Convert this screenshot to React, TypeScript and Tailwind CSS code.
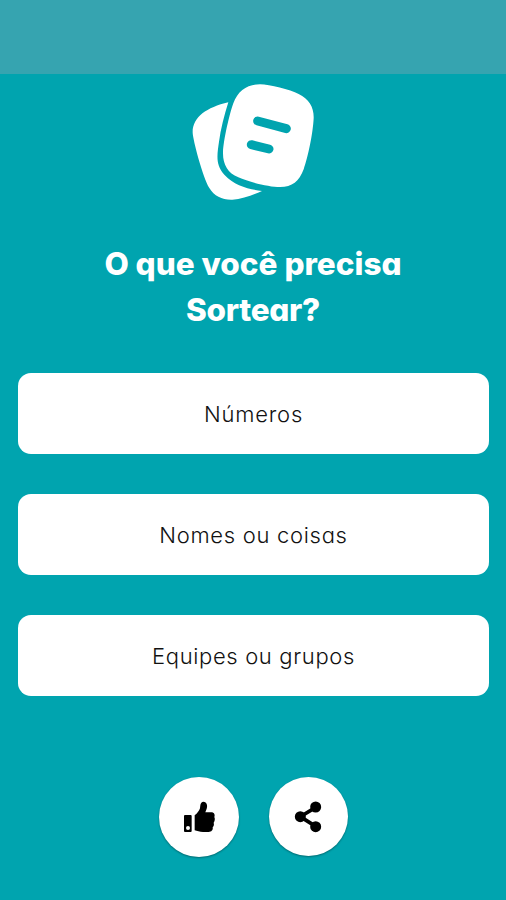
const options = [
  { label: "Números", spacing: "tracking-[0.8px]" },
  { label: "Nomes ou coisas", spacing: "tracking-[0.7px]" },
  { label: "Equipes ou grupos", spacing: "tracking-[0.65px]" },
];

function Logo() {
  return (
    <svg className="ml-1 block h-[136px] w-[150px]" viewBox="0 42 450 408" fill="none">
      <path
        d="M145 127 C80 142 37 172 38 218 C39 240 68 350 88 384 C103 409 127 420 157 419 C187 417 218 405 246 393 C207 388 163 377 133 344 C105 314 112 281 117 245 C122 207 133 165 145 127Z"
        fill="#fff"
      />
      <path
        d="M240 73 C269 73 330 89 356 102 C387 117 402 142 401 175 C399 219 384 292 371 328 C357 365 337 381 300 381 C268 381 206 366 175 352 C143 338 128 313 129 276 C131 238 148 164 160 130 C174 91 203 73 240 73Z"
        fill="#fff"
      />
      <path d="M233 183 L319 206 M214 254 L267 267" stroke="#00a4af" strokeWidth="27" strokeLinecap="round" />
    </svg>
  );
}

function ThumbIcon() {
  return (
    <svg className="size-[80px]" viewBox="27 36 240 240" fill="none">
      <path fillRule="evenodd" d="M105 150H122Q125 150 125 153V198Q125 201 122 201H105Q102 201 102 198V153Q102 150 105 150ZM114 183A6 6 0 1 0 114 195A6 6 0 1 0 114 183Z" fill="#000" />
      <path d="M134 151 C142 145 148 137 150 130 C151 121 151 111 160 110 C171 110 173 122 170 131 L166 142 H184 C192 142 196 149 193 156 C196 162 194 169 191 173 C193 179 191 184 188 187 C190 195 184 201 176 201 H159 C149 201 141 197 134 196Z" fill="#000" />
    </svg>
  );
}

function ShareIcon() {
  return (
    <svg className="size-[79px]" viewBox="28 36 237 237" fill="#000">
      <path d="M168 127L122 155L168 184" fill="none" stroke="#000" strokeWidth="11" />
      <circle cx="168" cy="126" r="16.5" />
      <circle cx="122" cy="155" r="16.5" />
      <circle cx="168" cy="185" r="16.5" />
    </svg>
  );
}

export default function App() {
  return (
    <main className="flex h-[900px] w-[506px] flex-col items-center overflow-hidden bg-[#00a4af] font-['Inter','Liberation_Sans',sans-serif] [font-feature-settings:'cv11']">
      <header className="h-[74px] w-full shrink-0 bg-[#36a4b0]" />
      <Logo />
      <h1 className="mt-[31px] text-center text-[31.5px] leading-[46px] font-extrabold text-white">
        <span className="block">O que você precisa</span>
        <span className="block tracking-[-0.3px]">Sortear?</span>
      </h1>
      <div className="mt-[40px] flex w-full flex-col gap-[40px] pr-[17px] pl-[18px]">
        {options.map((o) => (
          <button
            key={o.label}
            className={`h-[81px] w-full rounded-[13px] bg-white pt-[2px] text-[22px] font-light text-[#111] ${o.spacing}`}
          >
            {o.label}
          </button>
        ))}
      </div>
      <div className="mt-[81px] flex gap-[30px]">
        <button aria-label="Curtir" className="size-[80px] rounded-full bg-white shadow-[0_1px_2px_rgba(0,0,0,0.35)]">
          <ThumbIcon />
        </button>
        <button aria-label="Compartilhar" className="size-[79px] rounded-full bg-white shadow-[0_1px_2px_rgba(0,0,0,0.35)]">
          <ShareIcon />
        </button>
      </div>
    </main>
  );
}
